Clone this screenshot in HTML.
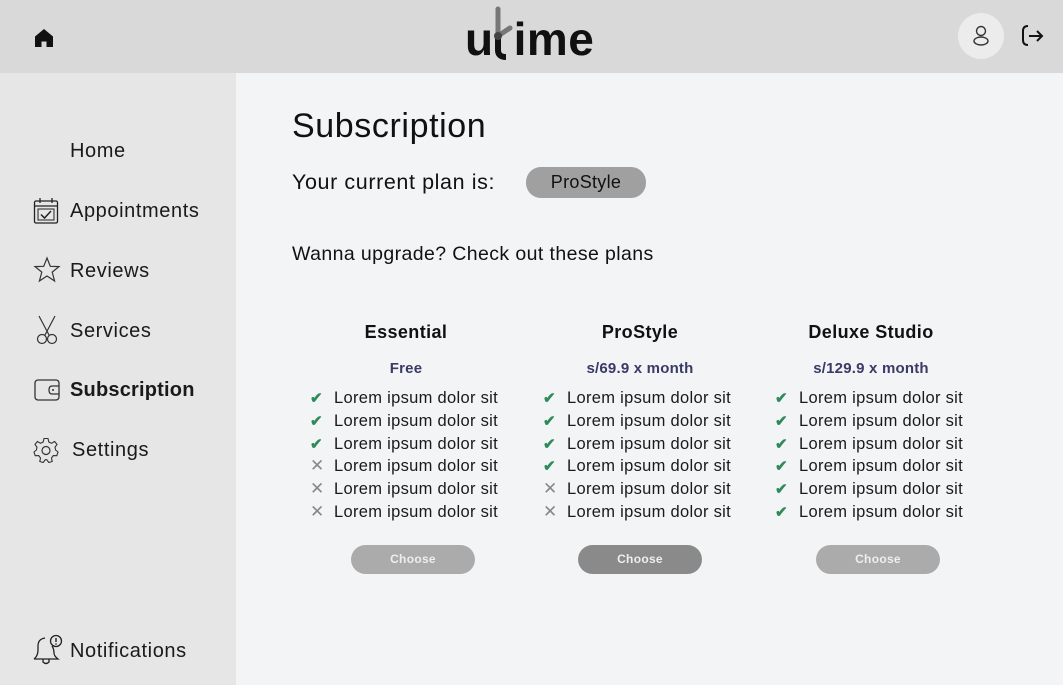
<!DOCTYPE html>
<html><head><meta charset="utf-8"><style>
*{margin:0;padding:0;box-sizing:border-box}
body{width:1063px;height:685px;overflow:hidden;background:#f3f4f6;font-family:"Liberation Sans",sans-serif;color:#111;position:relative}
.a{position:absolute;white-space:nowrap}
#hdr{position:absolute;left:0;top:0;width:1063px;height:73px;background:#d9d9d9}
#side{position:absolute;left:0;top:73px;width:236px;height:612px;background:#e6e6e6}
.nav{font-size:20px;letter-spacing:0.6px;color:#1a1a1a;line-height:20px}
.ic{position:absolute}
.col{position:absolute;width:230px}
.t{font-size:18px;font-weight:bold;text-align:center;letter-spacing:0.4px}
.p{font-size:15px;font-weight:bold;color:#3a3a66;text-align:center;letter-spacing:0.2px}
.li{font-size:16.5px;letter-spacing:0.3px;color:#1a1a1a;height:22.8px;line-height:22.8px;position:relative}
.ck{display:inline-block;width:24px;font-size:15px;font-weight:bold;color:#2e8b57}
.x{display:inline-block;width:24px;font-size:17px;color:#888}
.btn{position:absolute;width:124px;height:29px;border-radius:15px;background:#ababab;color:#eee;font-size:12px;font-weight:bold;text-align:center;line-height:29px;letter-spacing:0.3px}
</style></head><body>
<div id="hdr"></div>
<div id="side"></div>
<svg class="ic" style="left:33px;top:28px" width="22" height="20" viewBox="0 0 22 20"><path d="M11 1 L2 8.5 V19 H8.5 V13.5 H13.5 V19 H20 V8.5 Z" fill="#111"/></svg>
<div class="a" style="left:465px;top:14px;font-size:46px;font-weight:bold;letter-spacing:0.5px;color:#111;line-height:50px">u<span style="display:inline-block;width:20px"></span>ime</div>
<svg class="ic" style="left:488px;top:6px" width="28" height="56" viewBox="0 0 28 56"><path d="M10 3 V30" stroke="#777" stroke-width="5" stroke-linecap="round"/><path d="M10 30 L22 22" stroke="#777" stroke-width="5" stroke-linecap="round"/><path d="M10 30 V44 Q10 51 18 51" stroke="#111" stroke-width="6" fill="none"/><circle cx="10" cy="30" r="4" fill="#444"/></svg>
<div class="a" style="left:958px;top:13px;width:46px;height:46px;border-radius:50%;background:#ececec"></div>
<svg class="ic" style="left:970px;top:24px" width="22" height="24" viewBox="0 0 22 24"><circle cx="11" cy="7" r="4.5" fill="none" stroke="#333" stroke-width="1.4"/><ellipse cx="11" cy="17" rx="7" ry="4" fill="none" stroke="#333" stroke-width="1.4"/></svg>
<svg class="ic" style="left:1020px;top:24px" width="26" height="24" viewBox="0 0 26 24"><path d="M8 2 Q3 2 3 7 V16 Q3 21 8 21" stroke="#111" stroke-width="2" fill="none"/><path d="M9 12 H22 M17 7 L22 12 L17 17" stroke="#111" stroke-width="2" fill="none"/></svg>

<div class="a nav" style="left:70px;top:141px">Home</div>
<svg class="ic" style="left:33px;top:197px" width="26" height="28" viewBox="0 0 26 28"><rect x="1.5" y="4" width="23" height="22" rx="1.5" fill="none" stroke="#222" stroke-width="1.3"/><path d="M1.5 9 H24.5 M7 1 V6 M19 1 V6" stroke="#222" stroke-width="1.3"/><rect x="5" y="12" width="16" height="11" fill="none" stroke="#222" stroke-width="1"/><path d="M8 17.5 L11.5 21 L18 14" stroke="#222" stroke-width="1.5" fill="none"/></svg>
<div class="a nav" style="left:70px;top:201px">Appointments</div>
<svg class="ic" style="left:33px;top:256px" width="28" height="28" viewBox="0 0 28 28"><path d="M14 2 L17.3 10.3 L26 10.6 L19.2 16.1 L21.6 25 L14 20 L6.4 25 L8.8 16.1 L2 10.6 L10.7 10.3 Z" fill="none" stroke="#333" stroke-width="1.2"/></svg>
<div class="a nav" style="left:70px;top:261px">Reviews</div>
<svg class="ic" style="left:34px;top:315px" width="26" height="30" viewBox="0 0 26 30"><path d="M5 1 L15 20 M21 1 L11 20" stroke="#333" stroke-width="1.2" fill="none"/><circle cx="8" cy="24" r="4.5" fill="none" stroke="#333" stroke-width="1.2"/><circle cx="18" cy="24" r="4.5" fill="none" stroke="#333" stroke-width="1.2"/></svg>
<div class="a nav" style="left:70px;top:321px">Services</div>
<svg class="ic" style="left:34px;top:379px" width="26" height="22" viewBox="0 0 26 22"><rect x="1" y="1" width="24" height="20" rx="3" fill="none" stroke="#333" stroke-width="1.3"/><path d="M25 7 H18 Q15 7 15 11 Q15 15 18 15 H25" fill="none" stroke="#333" stroke-width="1.3"/><circle cx="19" cy="11" r="1" fill="#333"/></svg>
<div class="a nav" style="left:70px;top:380px;font-weight:bold;letter-spacing:0.2px">Subscription</div>
<svg class="ic" style="left:33px;top:437px" width="26" height="26" viewBox="0 0 26 26"><path d="M11 1.5 H15 L15.8 5 L18.5 6.3 L21.6 4.5 L24 7.4 L22 10.3 L22.6 13 L25 15 L23.8 18.7 L20.3 18.6 L18.5 21 L19.2 24.5 L15.8 25.5 L13.7 22.7 H12.3 L10.2 25.5 L6.8 24.5 L7.5 21 L5.7 18.6 L2.2 18.7 L1 15 L3.4 13 L4 10.3 L2 7.4 L4.4 4.5 L7.5 6.3 L10.2 5 Z" fill="none" stroke="#333" stroke-width="1.1"/><circle cx="13" cy="13.5" r="4" fill="none" stroke="#333" stroke-width="1.2"/></svg>
<div class="a nav" style="left:72px;top:440px">Settings</div>
<svg class="ic" style="left:32px;top:634px" width="32" height="32" viewBox="0 0 32 32"><path d="M2 25 Q6 22 6 16 V12 Q6 5 13 4 M20 12 Q22 15 22 19 Q22 22 26 25 H2" fill="none" stroke="#222" stroke-width="1.3"/><path d="M11 25 V28 Q14 31 17 28 V25" fill="none" stroke="#222" stroke-width="1.3"/><circle cx="24" cy="7" r="5.5" fill="#e6e6e6" stroke="#222" stroke-width="1.3"/><path d="M24 4 V8" stroke="#222" stroke-width="1.4"/><circle cx="24" cy="10" r="0.8" fill="#222"/></svg>
<div class="a nav" style="left:70px;top:641px">Notifications</div>

<div class="a" style="left:292px;top:107px;font-size:34px;letter-spacing:0.6px;line-height:38px">Subscription</div>
<div class="a" style="left:292px;top:170px;font-size:21.5px;letter-spacing:0.6px;line-height:24px">Your current plan is:</div>
<div class="a" style="left:526px;top:167px;width:120px;height:31px;border-radius:15px;background:#a0a0a0;font-size:18px;text-align:center;line-height:31px;letter-spacing:0.3px">ProStyle</div>
<div class="a" style="left:292px;top:243px;font-size:19.5px;letter-spacing:0.4px;line-height:22px">Wanna upgrade? Check out these plans</div>

<div class="col" style="left:291px;top:322px">
<div class="t">Essential</div>
<div class="p" style="margin-top:17px">Free</div>
<div style="margin-left:19px;margin-top:10px">
<div class="li"><span class="ck">✔</span>Lorem ipsum dolor sit</div>
<div class="li"><span class="ck">✔</span>Lorem ipsum dolor sit</div>
<div class="li"><span class="ck">✔</span>Lorem ipsum dolor sit</div>
<div class="li"><span class="x">✕</span>Lorem ipsum dolor sit</div>
<div class="li"><span class="x">✕</span>Lorem ipsum dolor sit</div>
<div class="li"><span class="x">✕</span>Lorem ipsum dolor sit</div>
</div></div>
<div class="col" style="left:525px;top:322px">
<div class="t">ProStyle</div>
<div class="p" style="margin-top:17px">s/69.9 x month</div>
<div style="margin-left:18px;margin-top:10px">
<div class="li"><span class="ck">✔</span>Lorem ipsum dolor sit</div>
<div class="li"><span class="ck">✔</span>Lorem ipsum dolor sit</div>
<div class="li"><span class="ck">✔</span>Lorem ipsum dolor sit</div>
<div class="li"><span class="ck">✔</span>Lorem ipsum dolor sit</div>
<div class="li"><span class="x">✕</span>Lorem ipsum dolor sit</div>
<div class="li"><span class="x">✕</span>Lorem ipsum dolor sit</div>
</div></div>
<div class="col" style="left:756px;top:322px">
<div class="t">Deluxe Studio</div>
<div class="p" style="margin-top:17px">s/129.9 x month</div>
<div style="margin-left:19px;margin-top:10px">
<div class="li"><span class="ck">✔</span>Lorem ipsum dolor sit</div>
<div class="li"><span class="ck">✔</span>Lorem ipsum dolor sit</div>
<div class="li"><span class="ck">✔</span>Lorem ipsum dolor sit</div>
<div class="li"><span class="ck">✔</span>Lorem ipsum dolor sit</div>
<div class="li"><span class="ck">✔</span>Lorem ipsum dolor sit</div>
<div class="li"><span class="ck">✔</span>Lorem ipsum dolor sit</div>
</div></div>

<div class="btn" style="left:351px;top:545px">Choose</div>
<div class="btn" style="left:578px;top:545px;background:#8a8a8a">Choose</div>
<div class="btn" style="left:816px;top:545px">Choose</div>
</body></html>
